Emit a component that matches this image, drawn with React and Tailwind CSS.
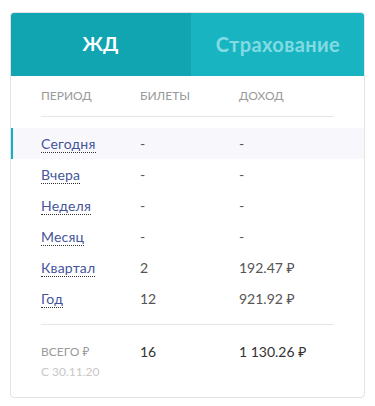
import React from "react";

const rows = [
  { p: "Сегодня", t: "-", d: "-", active: true },
  { p: "Вчера", t: "-", d: "-" },
  { p: "Неделя", t: "-", d: "-" },
  { p: "Месяц", t: "-", d: "-" },
  { p: "Квартал", t: "2", d: "192.47 ₽" },
  { p: "Год", t: "12", d: "921.92 ₽" },
];

export default function App() {
  return (
    <div className="w-[375px] h-[406px] bg-white pt-[12px] px-[10px]" style={{ fontFamily: "Lato, 'Noto Sans', sans-serif" }}>
      <div className="border border-[#e3e3e3] rounded-[4px] overflow-hidden">
        <div className="flex h-[64px] -mx-px -mt-px">
          <div className="w-[181px] bg-[#11a5b2] flex items-center justify-center text-white font-bold text-[19px]">ЖД</div>
          <div className="flex-1 bg-[#19b4c1] flex items-center justify-center text-[#82dbe2] font-bold text-[20px] tracking-[0.4px]">Страхование</div>
        </div>
        <div className="h-[41px] mx-[30px] flex items-center text-[12px] text-[#9a9a9a] border-b border-[#e6e6e6]">
          <div className="w-[99px]">ПЕРИОД</div>
          <div className="w-[99px]">БИЛЕТЫ</div>
          <div>ДОХОД</div>
        </div>
        <div className="mt-[11px]">
          {rows.map((r) => (
            <div
              key={r.p}
              className={
                "h-[31px] flex items-center text-[14px] border-l-2 " +
                (r.active ? "bg-[#f8f8fc] border-[#13b1bd]" : "border-transparent")
              }
            >
              <div className="ml-[28px] w-[99px]">
                <span className="text-[#44549a] border-b border-dotted border-[#333] leading-[16px] inline-block tracking-[0.2px]">{r.p}</span>
              </div>
              <div className="w-[99px] text-[#555]">{r.t}</div>
              <div className="text-[#555]">{r.d}</div>
            </div>
          ))}
        </div>
        <div className="mx-[30px] mt-[10px] border-t border-[#e6e6e6] pt-[17px] pb-[15px] flex">
          <div className="w-[99px] text-[12px] leading-[20px]">
            <div className="text-[#9a9a9a]">ВСЕГО ₽</div>
            <div className="text-[#c8c8c8]">С 30.11.20</div>
          </div>
          <div className="w-[99px] text-[14px] leading-[20px] text-[#333]">16</div>
          <div className="text-[14px] leading-[20px] text-[#333]">1 130.26 ₽</div>
        </div>
      </div>
    </div>
  );
}
